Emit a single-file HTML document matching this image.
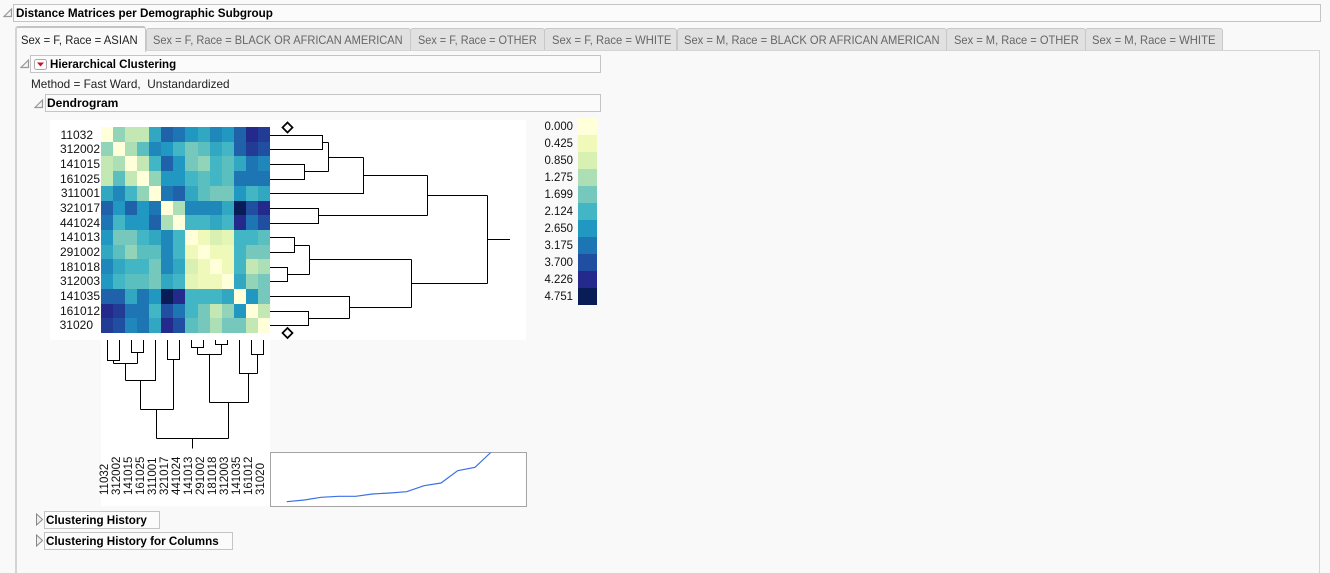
<!DOCTYPE html>
<html><head><meta charset="utf-8"><style>
html,body{margin:0;padding:0;width:1330px;height:573px;overflow:hidden;background:#f9f9f9;font-family:"Liberation Sans",sans-serif;font-size:12px;color:#111}
div,span,svg{position:absolute;box-sizing:border-box}
#root{left:0;top:0;width:1330px;height:573px;overflow:hidden;background:#f9f9f9}
.t{white-space:nowrap;line-height:16px;transform-origin:0 50%}
.b{font-weight:bold;color:#000}
.box{border:1px solid #c4c4c4;background:#fbfbfb}
.tab{top:28px;height:23px;background:#e1e1e1;border:1px solid #c8c8c8;border-bottom:none;border-radius:3px 3px 0 0;color:#666;line-height:22px;white-space:nowrap}
.tab span{left:6px;top:0;transform-origin:0 50%}
.hm{left:101px;top:127px;width:169px;height:206px;display:grid;grid-template-columns:repeat(14,1fr);grid-template-rows:repeat(14,1fr)}
.hm i{display:block}
.a{background:#ffffd9}.c{background:#eff9b9}.d{background:#e4f5b6}.e{background:#d9f0b3}.f{background:#c3e8b4}.g{background:#addfb6}.h{background:#91d4b8}.i{background:#75c8bb}.j{background:#5cbfbf}.k{background:#42b6c4}.l{background:#31a7c2}.m{background:#2198c1}.n{background:#2087bb}.o{background:#1e75b4}.p{background:#1f62aa}.q{background:#204ea0}.r{background:#223c96}.s{background:#232a8c}.u{background:#081d58}
.lab{left:50px;width:50px;text-align:right;line-height:15px;color:#111}
.leg{left:530px;width:43px;text-align:right;line-height:16px;color:#111;transform:scaleX(.95);transform-origin:100% 50%}
.sw{left:578px;width:19px;height:17px}
</style></head><body>
<div id="root">

<div class="box" style="left:13px;top:4px;width:1308px;height:18px"></div>
<svg style="left:3px;top:8px" width="10" height="10"><polygon points="8.5,1 8.5,8.5 1,8.5" fill="#f4f4f4" stroke="#999" stroke-width="1.2"/></svg>
<div class="t b" style="left:16px;top:5px;transform:scaleX(.973)">Distance Matrices per Demographic Subgroup</div>

<div class="tab" style="left:146px;width:265px"><span style="left:6px;transform:scaleX(.922)">Sex = F, Race = BLACK OR AFRICAN AMERICAN</span></div>
<div class="tab" style="left:410px;width:135px"><span style="left:7px;transform:scaleX(.908)">Sex = F, Race = OTHER</span></div>
<div class="tab" style="left:544px;width:133px"><span style="left:7px;transform:scaleX(.937)">Sex = F, Race = WHITE</span></div>
<div class="tab" style="left:677px;width:270px"><span style="left:6px;transform:scaleX(.93)">Sex = M, Race = BLACK OR AFRICAN AMERICAN</span></div>
<div class="tab" style="left:946px;width:140px"><span style="left:7px;transform:scaleX(.926)">Sex = M, Race = OTHER</span></div>
<div class="tab" style="left:1085px;width:138px"><span style="left:6px;transform:scaleX(.94)">Sex = M, Race = WHITE</span></div>

<div style="left:15px;top:50px;width:1305px;height:530px;border:1px solid #d4d4d4;border-left:2px solid #d4d4d4;background:#f9f9f9"></div>
<div class="tab" style="left:15px;top:26px;width:131px;height:26px;background:#f9f9f9;color:#222;border-top:2px solid #c4c4c4;border-left:2px solid #d4d4d4;border-bottom:none;line-height:24px"><span style="left:4px;transform:scaleX(.94)">Sex = F, Race = ASIAN</span></div>

<div class="box" style="left:30px;top:55px;width:571px;height:18px"></div>
<svg style="left:20px;top:59px" width="10" height="10"><polygon points="8.5,1 8.5,8.5 1,8.5" fill="#f4f4f4" stroke="#999" stroke-width="1.2"/></svg>
<svg style="left:34px;top:59px" width="13" height="11"><rect x=".5" y=".5" width="12" height="10" rx="2" fill="#fff" stroke="#aaa"/><polygon points="3,3.5 10,3.5 6.5,7.5" fill="#d01020"/></svg>
<div class="t b" style="left:50px;top:56px;transform:scaleX(.96)">Hierarchical Clustering</div>
<div class="t" style="left:31px;top:76px;color:#222;transform:scaleX(.98)">Method = Fast Ward,&nbsp; Unstandardized</div>

<div class="box" style="left:45px;top:94px;width:556px;height:18px"></div>
<svg style="left:34px;top:99px" width="10" height="10"><polygon points="8.5,1 8.5,8.5 1,8.5" fill="#f4f4f4" stroke="#999" stroke-width="1.2"/></svg>
<div class="t b" style="left:47px;top:95px">Dendrogram</div>

<div style="left:50px;top:120px;width:476px;height:220px;background:#fff"></div>
<div style="left:101px;top:340px;width:169px;height:166px;background:#fff"></div>

<div class="hm">
<i class="a"></i><i class="h"></i><i class="f"></i><i class="f"></i><i class="l"></i><i class="p"></i><i class="o"></i><i class="m"></i><i class="l"></i><i class="n"></i><i class="m"></i><i class="p"></i><i class="s"></i><i class="r"></i>
<i class="h"></i><i class="a"></i><i class="g"></i><i class="j"></i><i class="n"></i><i class="m"></i><i class="k"></i><i class="i"></i><i class="j"></i><i class="l"></i><i class="k"></i><i class="p"></i><i class="r"></i><i class="q"></i>
<i class="f"></i><i class="g"></i><i class="a"></i><i class="f"></i><i class="k"></i><i class="p"></i><i class="m"></i><i class="i"></i><i class="h"></i><i class="k"></i><i class="j"></i><i class="l"></i><i class="o"></i><i class="n"></i>
<i class="f"></i><i class="j"></i><i class="f"></i><i class="a"></i><i class="h"></i><i class="m"></i><i class="m"></i><i class="k"></i><i class="j"></i><i class="k"></i><i class="j"></i><i class="o"></i><i class="o"></i><i class="o"></i>
<i class="l"></i><i class="n"></i><i class="k"></i><i class="h"></i><i class="a"></i><i class="o"></i><i class="p"></i><i class="l"></i><i class="j"></i><i class="i"></i><i class="i"></i><i class="m"></i><i class="k"></i><i class="l"></i>
<i class="p"></i><i class="m"></i><i class="p"></i><i class="m"></i><i class="o"></i><i class="a"></i><i class="g"></i><i class="n"></i><i class="n"></i><i class="n"></i><i class="l"></i><i class="u"></i><i class="q"></i><i class="s"></i>
<i class="o"></i><i class="k"></i><i class="m"></i><i class="m"></i><i class="p"></i><i class="g"></i><i class="a"></i><i class="k"></i><i class="k"></i><i class="l"></i><i class="k"></i><i class="s"></i><i class="o"></i><i class="q"></i>
<i class="m"></i><i class="i"></i><i class="i"></i><i class="k"></i><i class="l"></i><i class="n"></i><i class="k"></i><i class="a"></i><i class="c"></i><i class="e"></i><i class="d"></i><i class="k"></i><i class="k"></i><i class="j"></i>
<i class="l"></i><i class="j"></i><i class="h"></i><i class="j"></i><i class="j"></i><i class="n"></i><i class="k"></i><i class="c"></i><i class="a"></i><i class="c"></i><i class="c"></i><i class="k"></i><i class="i"></i><i class="i"></i>
<i class="n"></i><i class="l"></i><i class="k"></i><i class="k"></i><i class="i"></i><i class="n"></i><i class="l"></i><i class="e"></i><i class="c"></i><i class="a"></i><i class="c"></i><i class="k"></i><i class="f"></i><i class="g"></i>
<i class="m"></i><i class="k"></i><i class="j"></i><i class="j"></i><i class="i"></i><i class="l"></i><i class="k"></i><i class="d"></i><i class="c"></i><i class="c"></i><i class="a"></i><i class="l"></i><i class="h"></i><i class="i"></i>
<i class="p"></i><i class="p"></i><i class="l"></i><i class="o"></i><i class="m"></i><i class="u"></i><i class="s"></i><i class="k"></i><i class="k"></i><i class="k"></i><i class="l"></i><i class="a"></i><i class="m"></i><i class="i"></i>
<i class="s"></i><i class="r"></i><i class="o"></i><i class="o"></i><i class="k"></i><i class="q"></i><i class="o"></i><i class="k"></i><i class="i"></i><i class="f"></i><i class="h"></i><i class="m"></i><i class="a"></i><i class="f"></i>
<i class="r"></i><i class="q"></i><i class="n"></i><i class="o"></i><i class="l"></i><i class="s"></i><i class="q"></i><i class="j"></i><i class="i"></i><i class="g"></i><i class="i"></i><i class="i"></i><i class="f"></i><i class="a"></i>
</div>

<div class="lab" style="top:128px;left:43px">11032</div>
<div class="lab" style="top:142px">312002</div>
<div class="lab" style="top:157px">141015</div>
<div class="lab" style="top:172px">161025</div>
<div class="lab" style="top:186px">311001</div>
<div class="lab" style="top:201px">321017</div>
<div class="lab" style="top:216px">441024</div>
<div class="lab" style="top:230px">141013</div>
<div class="lab" style="top:245px">291002</div>
<div class="lab" style="top:260px">181018</div>
<div class="lab" style="top:274px">312003</div>
<div class="lab" style="top:289px">141035</div>
<div class="lab" style="top:304px">161012</div>
<div class="lab" style="top:318px;left:43px">31020</div>

<svg style="left:0;top:0" width="1330" height="573" viewBox="0 0 1330 573">
<g fill="none" stroke="#000" stroke-width="1">
<path d="M270 135.5H322.5V149.5H270M322.5 142.5H328.5M270 164.5H304.5V179.5H270M304.5 171.5H328.5M328.5 142.5V171.5M328.5 157.5H363.5M270 193.5H363.5V157.5M363.5 175.5H427.5M270 208.5H318.5V223.5H270M318.5 215.5H427.5M427.5 175.5V215.5M427.5 195.5H487.5"/>
<path d="M270 237.5H294.5V252.5H270M294.5 245.5H309.5M270 267.5H287.5V281.5H270M287.5 274.5H309.5M309.5 245.5V274.5M309.5 259.5H411.5M270 311.5H308.5V325.5H270M308.5 318.5H349.5M270 296.5H349.5V318.5M349.5 307.5H411.5M411.5 259.5V307.5M411.5 283.5H487.5M487.5 195.5V283.5M487.5 239.5H510"/>
<path d="M107.5 340V360.5H119.5V340M113.5 360.5V363.5M131.5 340V352.5H143.5V340M137.5 352.5V363.5M113.5 363.5H137.5M125.5 363.5V380.5M125.5 380.5H155.5V340M140.5 380.5V409.5M167.5 340V359.5H179.5V340M173.5 359.5V409.5M140.5 409.5H173.5M156.5 409.5V438.5"/>
<path d="M191.5 340V347.5H203.5V340M197.5 347.5V354.5M215.5 340V344.5H227.5V340M221.5 344.5V354.5M197.5 354.5H221.5M209.5 354.5V402.5M251.5 340V354.5H263.5V340M257.5 354.5V373.5M239.5 340V373.5H257.5M248.5 373.5V402.5M209.5 402.5H248.5M228.5 402.5V438.5M156.5 438.5H228.5M192.5 438.5V448.5"/>
</g>
<polygon points="287.5,122.5 292.5,127.5 287.5,132.5 282.5,127.5" fill="#fff" stroke="#000" stroke-width="1.7"/>
<polygon points="287.5,328 292.5,333 287.5,338 282.5,333" fill="#fff" stroke="#000" stroke-width="1.7"/>
<g font-family="Liberation Sans" font-size="11.5" fill="#111">
<text transform="translate(108,495) rotate(-90)">11032</text>
<text transform="translate(120,495) rotate(-90)">312002</text>
<text transform="translate(132,495) rotate(-90)">141015</text>
<text transform="translate(144,495) rotate(-90)">161025</text>
<text transform="translate(156,495) rotate(-90)">311001</text>
<text transform="translate(168,495) rotate(-90)">321017</text>
<text transform="translate(180,495) rotate(-90)">441024</text>
<text transform="translate(192,495) rotate(-90)">141013</text>
<text transform="translate(204,495) rotate(-90)">291002</text>
<text transform="translate(216,495) rotate(-90)">181018</text>
<text transform="translate(228,495) rotate(-90)">312003</text>
<text transform="translate(240,495) rotate(-90)">141035</text>
<text transform="translate(252,495) rotate(-90)">161012</text>
<text transform="translate(264,495) rotate(-90)">31020</text>
</g>
<rect x="270.5" y="452.5" width="256" height="54" fill="#fff" stroke="#a4a4a4"/>
<polyline points="286.7,501.7 304.3,500 321,497.3 338.3,496.3 355.7,496.3 372.3,494 390,493 406.7,491.7 424,485.7 441,483 457.7,470.7 475,467.3 490.7,452.5" fill="none" stroke="#3c70e4" stroke-width="1.2"/>
</svg>

<div class="leg" style="top:118px">0.000</div>
<div class="leg" style="top:135px">0.425</div>
<div class="leg" style="top:152px">0.850</div>
<div class="leg" style="top:169px">1.275</div>
<div class="leg" style="top:186px">1.699</div>
<div class="leg" style="top:203px">2.124</div>
<div class="leg" style="top:220px">2.650</div>
<div class="leg" style="top:237px">3.175</div>
<div class="leg" style="top:254px">3.700</div>
<div class="leg" style="top:271px">4.226</div>
<div class="leg" style="top:288px">4.751</div>
<div class="sw" style="top:118px;background:#ffffd9"></div>
<div class="sw" style="top:135px;background:#f0f9b9"></div>
<div class="sw" style="top:152px;background:#d9f0b3"></div>
<div class="sw" style="top:169px;background:#addfb6"></div>
<div class="sw" style="top:186px;background:#75c8bb"></div>
<div class="sw" style="top:203px;background:#42b6c4"></div>
<div class="sw" style="top:220px;background:#2198c1"></div>
<div class="sw" style="top:237px;background:#1e75b4"></div>
<div class="sw" style="top:254px;background:#204ea0"></div>
<div class="sw" style="top:271px;background:#232a8c"></div>
<div class="sw" style="top:288px;height:17px;background:#081d58"></div>

<div class="box" style="left:44px;top:511px;width:116px;height:18px"></div>
<svg style="left:35px;top:513px" width="9" height="13"><polygon points="1.5,1 7.5,6.5 1.5,12" fill="#f0f0f0" stroke="#888"/></svg>
<div class="t b" style="left:46px;top:512px;transform:scaleX(.97)">Clustering History</div>
<div class="box" style="left:44px;top:532px;width:189px;height:18px"></div>
<svg style="left:35px;top:534px" width="9" height="13"><polygon points="1.5,1 7.5,6.5 1.5,12" fill="#f0f0f0" stroke="#888"/></svg>
<div class="t b" style="left:46px;top:533px;transform:scaleX(.97)">Clustering History for Columns</div>

</div>
</body></html>
